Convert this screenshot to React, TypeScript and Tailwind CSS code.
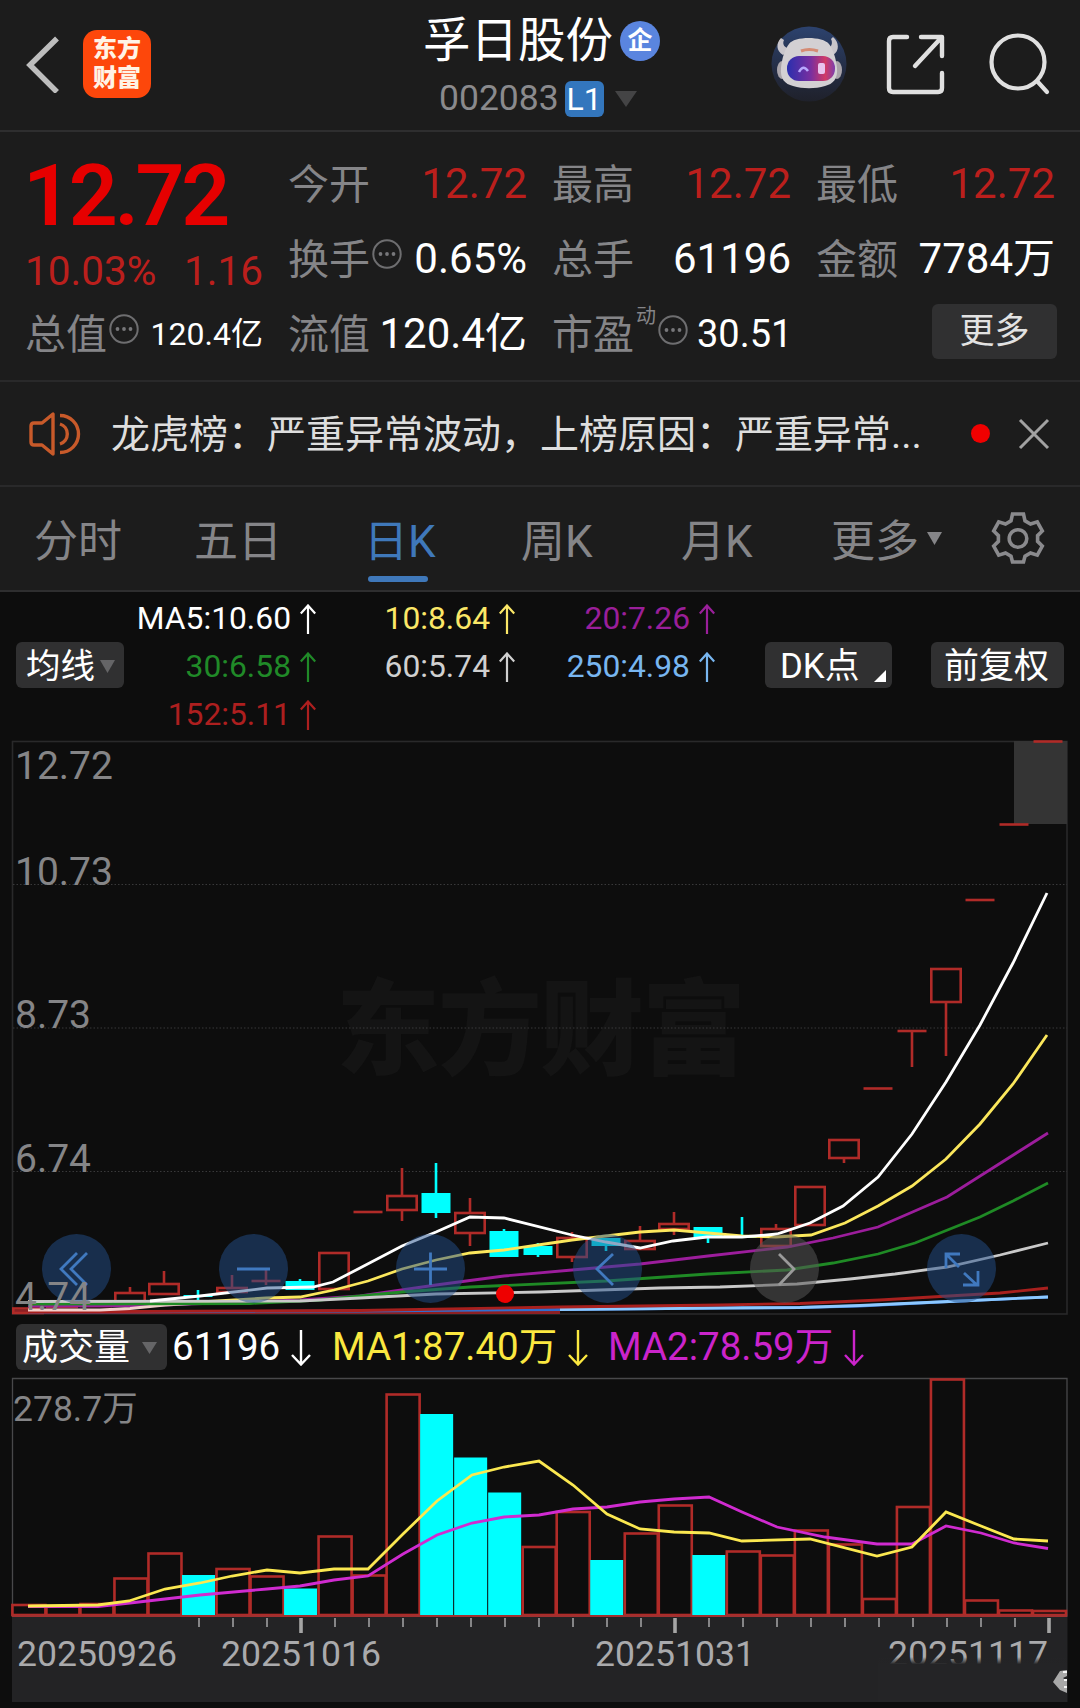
import type { ReactNode } from "react";

interface Candle {
  type: "up" | "down" | "dash";
  top: number;
  bottom: number;
  high?: number;
  low?: number;
}

const PITCH = 34;
const FIRST_X = 28;

const RED = "#b02b28";
const CYAN = "#00ffff";

const CANDLES: Candle[] = [
  { type: "up", top: 1308.5, bottom: 1313 },
  { type: "up", top: 1304, bottom: 1307 },
  { type: "up", top: 1303, bottom: 1306 },
  { type: "up", top: 1293, bottom: 1302, high: 1287 },
  { type: "up", top: 1284, bottom: 1294, high: 1271 },
  { type: "down", top: 1295, bottom: 1297, high: 1290, low: 1301 },
  { type: "up", top: 1288, bottom: 1292, high: 1275 },
  { type: "dash", top: 1281, bottom: 1281, high: 1270, low: 1285 },
  { type: "down", top: 1281, bottom: 1290, high: 1279 },
  { type: "up", top: 1253, bottom: 1289 },
  { type: "dash", top: 1212, bottom: 1212 },
  { type: "up", top: 1196, bottom: 1210, high: 1168, low: 1221 },
  { type: "down", top: 1193, bottom: 1213, high: 1163, low: 1218 },
  { type: "up", top: 1213, bottom: 1233, high: 1198, low: 1246 },
  { type: "down", top: 1231, bottom: 1257, high: 1229 },
  { type: "down", top: 1246, bottom: 1255, high: 1243, low: 1257 },
  { type: "up", top: 1238, bottom: 1257, high: 1232, low: 1262 },
  { type: "down", top: 1238, bottom: 1246, low: 1251 },
  { type: "up", top: 1241, bottom: 1249, high: 1226 },
  { type: "up", top: 1224, bottom: 1229, high: 1212, low: 1235 },
  { type: "down", top: 1227, bottom: 1237, low: 1243 },
  { type: "down", top: 1236, bottom: 1238, high: 1217 },
  { type: "up", top: 1229, bottom: 1246, high: 1224 },
  { type: "up", top: 1187, bottom: 1225 },
  { type: "up", top: 1140, bottom: 1158, low: 1163 },
  { type: "dash", top: 1088.5, bottom: 1088.5 },
  { type: "dash", top: 1031, bottom: 1031, low: 1067 },
  { type: "up", top: 969, bottom: 1002, low: 1056 },
  { type: "dash", top: 900, bottom: 900 },
  { type: "dash", top: 824.5, bottom: 824.5 },
  { type: "dash", top: 741.5, bottom: 741.5 },
];

const PRICE_LINES = [
  {
    color: "#2f6fd0",
    points: "28,1312 360,1311 560,1309.5 720,1308 800,1307.5 860,1306 960,1301 1048,1297",
  },
  {
    color: "#8cc8ff",
    points: "560,1309.5 720,1308 800,1307.5 860,1305.5 960,1301 1048,1297",
  },
  {
    color: "#a8201e",
    points: "28,1312 360,1310.5 560,1307 720,1305 800,1303.5 880,1300 1000,1293 1048,1288",
  },
  {
    color: "#9c1d9c",
    points:
      "28,1306 150,1305.5 300,1300 360,1296 436,1285 504,1276 572,1270 640,1264 708,1256 787,1247 833,1238 878,1227 947,1197 1048,1133",
  },
  {
    color: "#fbe75c",
    points:
      "160,1304 200,1302 266,1298 300,1297 334,1290 368,1281 402,1269 436,1260 470,1253 504,1250 538,1245 572,1240 606,1236 640,1232 674,1230 708,1233 742,1236 776,1237 811,1235 845,1223 878,1206 912,1186 946,1159 980,1124 1013,1084 1047,1035",
  },
  {
    color: "#f2cfcb",
    points: "28,1310 100,1310 130,1308.5 165,1305 200,1303",
  },
  {
    color: "#1f8a25",
    points:
      "28,1304 250,1303.5 320,1300 350,1297 402,1292 470,1287 606,1281 708,1274 787,1270 833,1263 878,1254 915,1243 980,1217 1013,1201 1048,1183",
  },
  {
    color: "#c9c9c9",
    points:
      "28,1301.5 300,1301 360,1298 436,1294 540,1292 660,1288 720,1287 797,1284 850,1279 895,1274 947,1267 1000,1255 1048,1243",
  },
  {
    color: "#ffffff",
    points:
      "150,1301 200,1296 267,1288 313,1287 333,1282 360,1268 402,1246 436,1232 470,1217 504,1218 572,1235 606,1242 640,1248 673,1241 707,1237 742,1237 777,1234 810,1223 843,1206 878,1177 912,1134 946,1082 980,1025 1013,963 1047,893",
  },
];

const VOLUMES: { top: number; down?: boolean }[] = [
  { top: 1605 },
  { top: 1606 },
  { top: 1604 },
  { top: 1578.5 },
  { top: 1553.5 },
  { top: 1575, down: true },
  { top: 1569 },
  { top: 1576.5 },
  { top: 1588.5, down: true },
  { top: 1536.5 },
  { top: 1575.5 },
  { top: 1394.5 },
  { top: 1414, down: true },
  { top: 1457.5, down: true },
  { top: 1492.5, down: true },
  { top: 1547 },
  { top: 1512 },
  { top: 1560, down: true },
  { top: 1533.5 },
  { top: 1505.5 },
  { top: 1555, down: true },
  { top: 1551.5 },
  { top: 1555.5 },
  { top: 1530.5 },
  { top: 1544.5 },
  { top: 1599 },
  { top: 1507 },
  { top: 1379.5 },
  { top: 1600.5 },
  { top: 1610.5 },
  { top: 1611 },
];

const VOLUME_MA1 =
  "28,1606 98,1605 129,1601 165,1589 200,1583 232,1576 267,1570 300,1573 334,1569 368,1569 403,1534 437,1501 472,1475 504,1467 539,1461 573,1485 607,1514 640,1529 674,1532 709,1533 742,1541 810,1539 877,1556 912,1547 946,1512 981,1526 1014,1539 1048,1541";
const VOLUME_MA2 =
  "28,1606.5 98,1606.5 130,1603 165,1599 200,1595 267,1589 300,1586 334,1580 368,1576 403,1554 437,1535 472,1523 504,1517 539,1515 573,1509 607,1507 640,1502 674,1499 709,1497 742,1512 777,1527 825,1537 877,1544 912,1544 946,1526 981,1533 1014,1543 1048,1548.5";

function Candlesticks() {
  return (
    <g strokeWidth={2.6}>
      {CANDLES.map((c, i) => {
        const x = FIRST_X + PITCH * i;
        const color = c.type === "down" ? CYAN : RED;
        return (
          <g key={i} stroke={color}>
            {c.high && <line x1={x} x2={x} y1={c.high} y2={c.top} />}
            {c.low && <line x1={x} x2={x} y1={c.bottom} y2={c.low} />}
            {c.type === "dash" && <line x1={x - 14.5} x2={x + 14.5} y1={c.top} y2={c.top} />}
            {c.type === "up" && (
              <rect x={x - 14.7} y={c.top} width={29.4} height={c.bottom - c.top} fill="none" />
            )}
            {c.type === "down" && (
              <rect x={x - 14.5} y={c.top} width={29} height={c.bottom - c.top} fill={color} stroke="none" />
            )}
          </g>
        );
      })}
    </g>
  );
}

function MoreDots() {
  return (
    <svg width="30" height="30" viewBox="0 0 30 30" className="shrink-0">
      <circle cx="15" cy="15" r="13.7" fill="none" stroke="#6e6e70" strokeWidth="2" />
      <circle cx="8.5" cy="15" r="1.9" fill="#77777a" />
      <circle cx="15" cy="15" r="1.9" fill="#77777a" />
      <circle cx="21.5" cy="15" r="1.9" fill="#77777a" />
    </svg>
  );
}

function Triangle({ width, height, color }: { width: number; height: number; color: string }) {
  return (
    <svg width={width} height={height} viewBox="0 0 10 10" preserveAspectRatio="none" className="shrink-0">
      <path d="M0 0H10L5 10Z" fill={color} />
    </svg>
  );
}

function Arrow({ down = false }: { down?: boolean }) {
  return down ? (
    <svg width="20" height="36" viewBox="0 0 20 36" fill="none" stroke="currentColor" strokeWidth="2.4">
      <path d="M10 0V34M1 25L10 34.5L19 25" />
    </svg>
  ) : (
    <svg width="16" height="30" viewBox="0 0 16 30" fill="none" stroke="currentColor" strokeWidth="2.2">
      <path d="M8 30V1.5M0.8 9.5L8 1.5L15.2 9.5" />
    </svg>
  );
}

function RobotAvatar() {
  return (
    <svg width="76" height="78" viewBox="0 0 76 78">
      <defs>
        <linearGradient id="sky" x1="0" y1="0" x2="0" y2="1">
          <stop offset="0" stopColor="#2c426e" />
          <stop offset="0.6" stopColor="#242c42" />
          <stop offset="1" stopColor="#1f212b" />
        </linearGradient>
        <linearGradient id="visor" x1="0" y1="0" x2="1" y2="0">
          <stop offset="0" stopColor="#2a2fae" />
          <stop offset="0.5" stopColor="#7a2f9f" />
          <stop offset="0.8" stopColor="#d13a66" />
          <stop offset="1" stopColor="#7c3fae" />
        </linearGradient>
      </defs>
      <circle cx="38" cy="39" r="37.5" fill="url(#sky)" />
      <path d="M10 13C5 18 5 26 12 30L20 24C13 23 11 19 13 15Z" fill="#c9c6cb" />
      <path d="M62 12C68 17 69 26 62 30L54 24C61 23 62 18 60 14Z" fill="#c9c6cb" />
      <ellipse cx="11" cy="45" rx="5" ry="9" fill="#a9a4aa" />
      <ellipse cx="66" cy="45" rx="5" ry="9" fill="#a9a4aa" />
      <path
        d="M18 19C23 11 52 11 58 19C62 24 65 33 66 43C67 54 62 59 54 61C44 64 32 64 22 61C14 59 9 54 10 43C11 33 14 24 18 19Z"
        fill="#d3d0d3"
      />
      <path d="M30 26Q38 23 47 26" stroke="#d58b74" strokeWidth="3" fill="none" />
      <rect x="16" y="31" width="48" height="25" rx="12" fill="url(#visor)" />
      <path d="M28 47Q32 39 37 46" stroke="#b8a8ff" strokeWidth="2.5" fill="none" />
      <rect x="47" y="38" width="7" height="11" rx="2" fill="#e9c3ee" />
    </svg>
  );
}

function Header() {
  return (
    <header className="flex h-[132px] items-start border-b-2 border-[#2e2e2f] pl-[26px] pr-[28px]">
      <div className="flex w-[397px] items-center gap-[23px] pt-[30px]">
        <svg width="34" height="58" viewBox="0 0 34 58" fill="none" stroke="#bdbdbd" strokeWidth="5.5">
          <path d="M31 3.5L4 30L31 57" />
        </svg>
        <div className="flex h-[68px] w-[68px] flex-col items-center justify-center rounded-[14px] bg-[#fd470b] text-[24px] font-black leading-[29px] text-[#fff3e6]">
          <span>东方</span>
          <span>财富</span>
        </div>
      </div>
      <div className="flex w-[240px] flex-col">
        <div className="mt-[17px] flex h-[50px] items-center">
          <span className="w-[188px] whitespace-nowrap text-[47.5px] leading-none text-white">孚日股份</span>
          <span className="-mt-[3px] ml-[9px] flex h-[40px] w-[40px] shrink-0 items-center justify-center rounded-full bg-[#5a85df] text-[25px] font-bold leading-none text-white">
            企
          </span>
        </div>
        <div className="mt-[14px] flex h-[36px] items-center pl-[16px]">
          <span className="text-[35.5px] leading-none text-[#8a8a8d]">002083</span>
          <span className="ml-[6px] flex h-[36px] w-[39px] items-center justify-center rounded-[6px] bg-[#3376bd] text-[32px] leading-none text-white">
            L1
          </span>
          <span className="ml-[11px] flex">
            <Triangle width={22} height={16} color="#444445" />
          </span>
        </div>
      </div>
      <div className="ml-auto flex w-[281px] items-center pt-[25px]">
        <RobotAvatar />
        <svg width="62" height="62" viewBox="0 0 62 62" fill="none" stroke="#e0e0e0" strokeWidth="4.4" strokeLinecap="round" className="ml-[38px]">
          <path d="M22 4H8Q4 4 4 8V55Q4 59 8 59H53Q57 59 57 55V40M36 4H57V23M56 5L30 33" strokeLinejoin="round" />
        </svg>
        <svg width="62" height="62" viewBox="0 0 62 62" fill="none" stroke="#e0e0e0" strokeWidth="4.2" strokeLinecap="round" className="ml-[42px]">
          <circle cx="29" cy="29" r="26.5" />
          <path d="M48 48L58 59" />
        </svg>
      </div>
    </header>
  );
}

interface CellProps {
  label: string;
  value: string;
  tone?: "red" | "white";
  icon?: boolean;
}

function Cell({ label, value, tone = "white", icon }: CellProps) {
  return (
    <div className="flex h-[75px] items-center justify-between">
      <span className="flex items-center pl-[1px] pt-[3px] text-[41px] leading-none text-[#858588]">
        {label}
        {icon && <span className="-mt-3 ml-[2px] flex"><MoreDots /></span>}
      </span>
      <span className={`text-[42px] leading-none ${tone === "red" ? "text-[#bb1f1c]" : "text-white"}`}>{value}</span>
    </div>
  );
}

function Quote() {
  return (
    <section className="flex h-[250px] gap-6 border-b-2 border-[#29292a] pl-[25px] pt-[14px]">
      <div className="w-[238px]">
        <div className="-ml-[2px] flex h-[99px] items-center text-[86px] font-semibold leading-none tracking-[-3.4px] text-[#e60000]">
          12.72
        </div>
        <div className="flex h-[51px] items-center justify-between pt-[1px] text-[40.5px] leading-none text-[#bb1f1c]">
          <span>10.03%</span>
          <span>1.16</span>
        </div>
        <div className="flex h-[75px] items-center justify-between leading-none">
          <span className="flex items-center pt-[3px] text-[41px] text-[#858588]">
            总值
            <span className="-mt-3 ml-[2px] flex"><MoreDots /></span>
          </span>
          <span className="text-[32px] text-white">120.4亿</span>
        </div>
      </div>
      <div className="grid grid-cols-[240px_240px_240px] content-start gap-x-6">
        <Cell label="今开" value="12.72" tone="red" />
        <Cell label="最高" value="12.72" tone="red" />
        <Cell label="最低" value="12.72" tone="red" />
        <Cell label="换手" value="0.65%" icon />
        <Cell label="总手" value="61196" />
        <Cell label="金额" value="7784万" />
        <Cell label="流值" value="120.4亿" />
        <div className="flex h-[75px] items-center whitespace-nowrap pl-[1px] leading-none">
          <span className="shrink-0 pt-[3px] text-[41px] text-[#858588]">市盈</span>
          <span className="-mt-9 ml-[2px] shrink-0 text-[20px] text-[#858588]">动</span>
          <span className="-mt-2 ml-[2px] flex"><MoreDots /></span>
          <span className="ml-[9px] text-[38px] text-white">30.51</span>
        </div>
        <div className="flex h-[75px] items-center justify-end">
          <button className="-mr-[2px] -mt-[4px] flex h-[55px] w-[125px] items-center justify-center rounded-[6px] bg-[#303031] text-[35px] leading-none text-[#e2e2e2]">
            更多
          </button>
        </div>
      </div>
    </section>
  );
}

function Notice() {
  return (
    <section className="flex h-[105px] items-center border-b-2 border-[#29292a] pl-[28px]">
      <svg width="54" height="46" viewBox="0 0 54 46" fill="none" stroke="#c85a2a" strokeWidth="3.4" strokeLinejoin="round">
        <path d="M25 3V43L14 34H6Q3 34 3 31V15Q3 12 6 12H14Z" />
        <path d="M32 13A10.5 10.5 0 0 1 32 33" />
        <path d="M32 4.5A18.5 18.5 0 0 1 32 41.5" />
      </svg>
      <span className="ml-[29px] w-[830px] whitespace-nowrap pt-[3px] text-[39px] leading-none text-[#dedede]">
        龙虎榜：严重异常波动，上榜原因：严重异常...
      </span>
      <span className="ml-[30px] h-[19px] w-[19px] rounded-full bg-[#f00000]" />
      <svg width="32" height="32" viewBox="0 0 32 32" stroke="#a2a2a2" strokeWidth="3" className="ml-[28px]">
        <path d="M2 2L30 30M30 2L2 30" />
      </svg>
    </section>
  );
}

function GearIcon() {
  return (
    <svg width="54" height="54" viewBox="0 0 54 54" fill="none" stroke="#8a8a8d" strokeWidth="3.6" className="-mt-[2px]">
      <path d="M21.5 3H32.5L34 9.8L39.5 13L46.3 10.8L51.3 20L46.6 24.6V30.4L51.3 35L46.3 44.2L39.5 42L34 45.2L32.5 51H21.5L20 45.2L14.5 42L7.7 44.2L2.7 35L7.4 30.4V24.6L2.7 20L7.7 10.8L14.5 13L20 9.8Z" />
      <circle cx="27" cy="27.5" r="8.8" />
    </svg>
  );
}

function Tab({ children, active }: { children: ReactNode; active?: boolean }) {
  return (
    <div className={`flex h-full w-[160px] flex-col items-start pt-[33px] ${active ? "text-[#3f78ba]" : "text-[#858588]"}`}>
      <span className="text-[44px] leading-none">{children}</span>
      {active && <span className="ml-[4px] mt-[12px] h-[6px] w-[60px] rounded-full bg-[#3f78ba]" />}
    </div>
  );
}

function Tabs() {
  return (
    <nav className="flex h-[105px] items-center border-b-2 border-[#2e2e2f] pl-[34px]">
      <Tab>分时</Tab>
      <Tab>五日</Tab>
      <div className="h-full pl-[10px]"><Tab active>日K</Tab></div>
      <div className="-ml-[3px] h-full"><Tab>周K</Tab></div>
      <div className="h-full"><Tab>月K</Tab></div>
      <div className="-ml-[10px] flex w-[160px] items-center pt-[6px] text-[44px] leading-none text-[#858588]">
        更多
        <span className="-mt-[7px] ml-[8px] flex"><Triangle width={15} height={13} color="#858588" /></span>
      </div>
      <GearIcon />
    </nav>
  );
}

function MaValue({ text, className }: { text: string; className: string }) {
  return (
    <div className={`flex items-center justify-end gap-[9px] text-[31.8px] leading-none ${className}`}>
      <span>{text}</span>
      <Arrow />
    </div>
  );
}

function MovingAverages() {
  return (
    <section className="flex h-[148px] pl-[16px]">
      <button className="mt-[50px] flex h-[46px] w-[108px] items-center gap-[5px] rounded-[6px] bg-[#303031] pl-[10px] pt-[2px] text-[34.5px] leading-none text-white">
        均线
        <Triangle width={15} height={13} color="#656567" />
      </button>
      <div className="mt-[3px] grid w-[591px] grid-cols-[192px_199px_200px] grid-rows-[48px_48px_48px]">
        <MaValue text="MA5:10.60" className="text-white" />
        <MaValue text="10:8.64" className="text-[#fbe767]" />
        <MaValue text="20:7.26" className="text-[#9a1f9a]" />
        <MaValue text="30:6.58" className="text-[#208a28]" />
        <MaValue text="60:5.74" className="text-[#d0d0d0]" />
        <MaValue text="250:4.98" className="text-[#78b6f0]" />
        <MaValue text="152:5.11" className="text-[#ad1f1f]" />
      </div>
      <button className="ml-[50px] mt-[50px] flex h-[46px] w-[127px] items-center justify-between rounded-[6px] bg-[#303031] pl-[15px] pr-[6px] pt-[2px] text-[34.8px] leading-none text-white">
        DK点
        <svg width="12" height="12" viewBox="0 0 12 12" className="mt-[20px]">
          <path d="M12 0V12H0Z" fill="#fff" />
        </svg>
      </button>
      <button className="ml-[39px] mt-[50px] flex h-[46px] w-[133px] items-center justify-center rounded-[6px] bg-[#303031] pr-[2px] pt-[2px] text-[35px] leading-none text-white">
        前复权
      </button>
    </section>
  );
}

const CONTROLS: { d: string; muted?: boolean }[] = [
  { d: "M35 19L19 35L35 51M45 19L29 35L45 51" },
  { d: "M18 35H51" },
  { d: "M18 35H51M34.5 18.5V51" },
  { d: "M40 20L24 35L40 51" },
  { d: "M29 20L44 35L29 51", muted: true },
  { d: "M19 34V20H33M20 21L32 33M37 39L50 51M51 37V51H36" },
];

function PriceChart() {
  return (
    <section className="relative h-[577px]">
      <svg width="1080" height="577" viewBox="0 740 1080 577" className="block">
        <text x="336" y="1067" fontSize="104" fontWeight="900" fill="#141414" textLength="410">
          东方财富
        </text>
        <rect x="12.5" y="741.5" width="1054.5" height="572.5" fill="none" stroke="#29292a" strokeWidth="1.6" />
        <g stroke="#39393a" strokeWidth="1.2" strokeDasharray="1.5 2">
          <line x1="13" x2="1067" y1="884.5" y2="884.5" />
          <line x1="13" x2="1067" y1="1028" y2="1028" />
          <line x1="13" x2="1067" y1="1171.5" y2="1171.5" />
        </g>
        <rect x="1014" y="741" width="53" height="83" fill="#343434" />
        <line x1="12" x2="560" y1="1312" y2="1312" stroke="#8c2024" strokeWidth="4" />
        <Candlesticks />
        {PRICE_LINES.map((l) => (
          <polyline key={l.color} points={l.points} fill="none" stroke={l.color} strokeWidth={2.8} />
        ))}
        <circle cx="505" cy="1294" r="9" fill="#ee0000" />
        <g fontSize="39" fill="#858587">
          <text x="15" y="779">12.72</text>
          <text x="15" y="885">10.73</text>
          <text x="15" y="1028">8.73</text>
          <text x="15" y="1172">6.74</text>
        </g>
      </svg>
      <div className="absolute left-[42px] top-[494px] flex gap-[108px]">
        {CONTROLS.map((c) => (
          <button
            key={c.d}
            className={`h-[69px] w-[69px] rounded-full ${c.muted ? "bg-[#555555]/55" : "bg-[#23508c]/50"}`}
          >
            <svg width="69" height="69" viewBox="0 0 69 69" fill="none" stroke={c.muted ? "#9a9a9a" : "#4079bf"} strokeWidth="2.8">
              <path d={c.d} />
            </svg>
          </button>
        ))}
      </div>
      {/* lowest axis label sits over the first control */}
      <span className="pointer-events-none absolute left-[15px] top-[538px] text-[39px] leading-none text-[#858587]">
        4.74
      </span>
    </section>
  );
}

function VolumeHeader() {
  return (
    <section className="flex h-[59px] items-center pl-[16px] text-[38.5px] leading-none">
      <button className="flex h-[46px] w-[151px] items-center gap-[12px] rounded-[6px] bg-[#303031] pl-[6px] pt-[2px] text-[36px] leading-none text-white">
        成交量
        <Triangle width={15} height={12} color="#656567" />
      </button>
      <div className="flex w-[165px] items-center gap-[11px] pl-[5px] pt-[2px] text-white">
        61196
        <Arrow down />
      </div>
      <div className="flex w-[276px] items-center gap-[11px] pt-[2px] text-[#fbe840]">
        MA1:87.40万
        <Arrow down />
      </div>
      <div className="flex items-center gap-[11px] pt-[2px] text-[#cb24cb]">
        MA2:78.59万
        <Arrow down />
      </div>
    </section>
  );
}

function VolumeChart() {
  const ticks = Array.from({ length: 26 }, (_, i) => i + 5);
  return (
    <section className="h-[332px]">
      <svg width="1080" height="332" viewBox="0 1376 1080 332" className="block">
        <defs>
          <linearGradient id="fade" x1="0" y1="0" x2="0" y2="1">
            <stop offset="0" stopColor="#242426" stopOpacity="0" />
            <stop offset="0.16" stopColor="#242426" />
          </linearGradient>
        </defs>
        <path d="M12.5 1617V1378.5H1067V1617" fill="none" stroke="#48484a" strokeWidth="1.3" />
        <rect x="12" y="1617" width="1055.5" height="85" fill="#232325" />
        <text x="13" y="1421" fontSize="35.5" fill="#858587">278.7万</text>
        {VOLUMES.map((v, i) => {
          const x = 11.4 + 34.02 * i;
          return v.down ? (
            <rect key={i} x={x + 0.5} y={v.top} width={33} height={1615.5 - v.top} fill={CYAN} />
          ) : (
            <rect key={i} x={x + 1} y={v.top} width={33} height={1615 - v.top} fill="none" stroke={RED} strokeWidth={2.6} />
          );
        })}
        <line x1="12" x2="1067" y1="1616" y2="1616" stroke="#a03030" strokeWidth="2" />
        <polyline points={VOLUME_MA2} fill="none" stroke="#d02bd0" strokeWidth={2.8} />
        <polyline points={VOLUME_MA1} fill="none" stroke="#fbe850" strokeWidth={2.8} />
        {ticks.map((i) => {
          const major = i === 8 || i === 19 || i === 30;
          const x = 29 + PITCH * i;
          return (
            <line
              key={i}
              x1={x}
              x2={x}
              y1={1618}
              y2={major ? 1633 : 1627}
              stroke={major ? "#a5a5a5" : "#858587"}
              strokeWidth={major ? 3.6 : 2}
            />
          );
        })}
        <g fontSize="35.6" fill="#aaaaac">
          <text x="17" y="1666">20250926</text>
          <text x="221" y="1666">20251016</text>
          <text x="595" y="1666">20251031</text>
          <text x="888" y="1666">20251117</text>
        </g>
        <rect x="878" y="1657" width="189" height="45" fill="url(#fade)" />
        <path d="M1053 1682L1060 1671L1067 1670V1676L1063 1678L1067 1681V1693L1060 1690Z" fill="#a8a8a8" />
        <path d="M1063 1672H1067M1064 1680H1067M1064 1687H1067" stroke="#f4f4f4" strokeWidth="2" />
      </svg>
    </section>
  );
}

export default function App() {
  return (
    <div className="h-[1708px] w-[1080px] overflow-hidden bg-[#0d0d0d] font-['Roboto','Noto_Sans_CJK_SC',sans-serif]">
      <div className="bg-[#1c1c1c]">
        <Header />
        <Quote />
        <Notice />
        <Tabs />
      </div>
      <MovingAverages />
      <PriceChart />
      <VolumeHeader />
      <VolumeChart />
    </div>
  );
}
